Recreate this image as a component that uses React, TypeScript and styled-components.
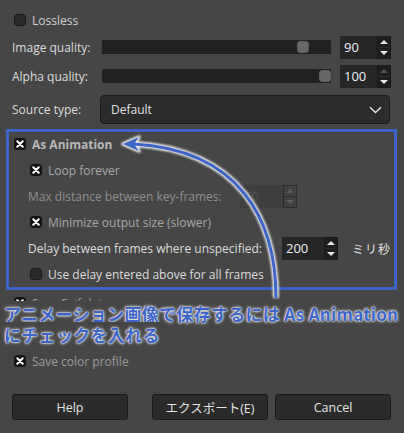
import React from "react";
import styled, { createGlobalStyle } from "styled-components";

const GlobalStyle = createGlobalStyle`
  html, body {
    margin: 0;
    padding: 0;
    background: #464646;
  }
  body {
    width: 404px;
    height: 433px;
    overflow: hidden;
    font-family: "Open Sans", "Noto Sans CJK JP", sans-serif;
    font-size: 12px;
    color: #dcdcdc;
  }
`;

const BLUE = "#3d65c7";

const Dialog = styled.div`
  position: relative;
  width: 404px;
  height: 433px;
  box-sizing: border-box;
  padding: 8px 13px 0 12px;
  display: flex;
  flex-direction: column;
`;

const Row = styled.div<{ $mt?: number; $h?: number; $pl?: number }>`
  display: flex;
  align-items: center;
  height: ${(p) => p.$h ?? 24}px;
  margin-top: ${(p) => p.$mt ?? 0}px;
  padding-left: ${(p) => p.$pl ?? 0}px;
  flex-shrink: 0;
`;

const Label = styled.span<{ $w?: number; $tone?: string; $bold?: boolean }>`
  width: ${(p) => (p.$w ? `${p.$w}px` : "auto")};
  flex-shrink: 0;
  color: ${(p) => p.$tone ?? "#dcdcdc"};
  font-weight: ${(p) => (p.$bold ? 700 : 400)};
  white-space: nowrap;
`;

const Box = styled.span<{ $on: boolean }>`
  width: 12px;
  height: 12px;
  box-sizing: border-box;
  border-radius: 3px;
  background: ${(p) => (p.$on ? "#141414" : "#2a2a2a")};
  border: 1px solid ${(p) => (p.$on ? "#141414" : "#1d1d1d")};
  display: inline-flex;
  align-items: center;
  justify-content: center;
  flex-shrink: 0;
  margin-right: 6px;
`;

const Check = ({ on, label, tone, bold }: { on: boolean; label: string; tone?: string; bold?: boolean }) => (
  <>
    <Box $on={on}>
      {on && (
        <svg width="8" height="8" viewBox="0 0 8 8">
          <path d="M1.3 1.3 L6.7 6.7 M6.7 1.3 L1.3 6.7" stroke="#fff" strokeWidth="2" strokeLinecap="round" />
        </svg>
      )}
    </Box>
    <Label $tone={tone} $bold={bold}>
      {label}
    </Label>
  </>
);

const Track = styled.div`
  position: relative;
  width: 229px;
  height: 14px;
  background: #222222;
  flex-shrink: 0;
`;

const Thumb = styled.div`
  position: absolute;
  top: 1px;
  width: 12px;
  height: 12px;
  box-sizing: border-box;
  border-radius: 3px;
  background: #676767;
  border: 1px solid #5c5c5c;
`;

const Slider = ({ value }: { value: number }) => (
  <Track>
    <Thumb style={{ left: Math.round((value / 100) * (229 - 12)) }} />
  </Track>
);

const SpinWrap = styled.div<{ $w: number; $ml?: number }>`
  display: flex;
  width: ${(p) => p.$w}px;
  height: 23px;
  margin-left: ${(p) => p.$ml ?? 0}px;
  flex-shrink: 0;
`;

const SpinValue = styled.div<{ $off?: boolean }>`
  flex: 1;
  display: flex;
  align-items: center;
  padding-left: 4px;
  background: ${(p) => (p.$off ? "#3f3f3f" : "#262626")};
  color: ${(p) => (p.$off ? "#565656" : "#ebeff7")};
  font-size: 13px;
`;

const SpinButtons = styled.div<{ $off?: boolean }>`
  width: 12px;
  display: flex;
  flex-direction: column;
  border: 1px solid ${(p) => (p.$off ? "#2c2c2c" : "#191919")};
  background: ${(p) => (p.$off ? "#414141" : "#1e1e1e")};
`;

const SpinButton = styled.div`
  flex: 1;
  display: flex;
  align-items: center;
  justify-content: center;
  & + & {
    border-top: 1px solid #2e2e2e;
  }
`;

const Tri = styled.span<{ $down?: boolean; $c: string }>`
  width: 0;
  height: 0;
  border-left: 4px solid transparent;
  border-right: 4px solid transparent;
  ${(p) => (p.$down ? `border-top: 4px solid ${p.$c};` : `border-bottom: 4px solid ${p.$c};`)}
`;

const Spin = ({
  value,
  w,
  ml,
  off,
  upOff,
}: {
  value: string;
  w: number;
  ml?: number;
  off?: boolean;
  upOff?: boolean;
}) => (
  <SpinWrap $w={w} $ml={ml}>
    <SpinValue $off={off}>{value}</SpinValue>
    <SpinButtons $off={off}>
      <SpinButton>
        <Tri $c={off ? "#5a5a5a" : upOff ? "#555" : "#e6e6e6"} />
      </SpinButton>
      <SpinButton>
        <Tri $down $c={off ? "#5a5a5a" : "#e6e6e6"} />
      </SpinButton>
    </SpinButtons>
  </SpinWrap>
);

const Combo = styled.div`
  width: 290px;
  height: 29px;
  box-sizing: border-box;
  display: flex;
  align-items: center;
  justify-content: space-between;
  padding: 0 7px 0 10px;
  background: #2c2c2c;
  border: 1px solid #1b1b1b;
  border-radius: 4px;
  color: #e2e2e2;
`;

const Frame = styled.div`
  display: flex;
  flex-direction: column;
  gap: 2px;
  margin: 5px -6px 0 -6px;
  padding: 0 0 1px 0;
  border: 3px solid ${BLUE};
  flex-shrink: 0;
`;

const Unit = styled.span`
  margin-left: 14px;
  font-family: "Noto Sans CJK JP", sans-serif;
  font-size: 12px;
  letter-spacing: 1px;
  color: #e0e0e0;
`;

const Buttons = styled.div`
  display: flex;
  gap: 7px;
  margin-top: 21px;
  height: 26px;
`;

const Button = styled.div<{ $push?: boolean }>`
  width: 116px;
  height: 26px;
  box-sizing: border-box;
  display: flex;
  align-items: center;
  justify-content: center;
  background: #2b2b2b;
  border: 1px solid #1c1c1c;
  border-radius: 3px;
  color: #e2e2e2;
  margin-left: ${(p) => (p.$push ? "auto" : "0")};
  font-size: 12.5px;
`;

const Note = styled.div`
  position: absolute;
  left: 4px;
  top: 303px;
  font-family: "Noto Sans CJK JP", "Noto Sans", sans-serif;
  font-weight: 700;
  font-size: 17px;
  line-height: 21px;
  letter-spacing: 0.3px;
  color: ${BLUE};
  white-space: nowrap;
  span {
    background: #464646;
    text-shadow: 0 0 1px #fff, 0 0 2px #f4f4f4, 0 0 3px #dcdcdc, 0 0 4px rgba(255, 255, 255, 0.45);
  }
`;

const Overlay = styled.svg`
  position: absolute;
  left: 0;
  top: 0;
  pointer-events: none;
`;

const CURVE = "M 276 298 C 276 220, 240 150, 134 144";
const HEAD = "123,144 139,137 134,144 139,151";

export default function App() {
  return (
    <>
      <GlobalStyle />
      <Dialog>
        <Row $pl={2}>
          <Check on={false} label="Lossless" tone="#cfcfcf" />
        </Row>
        <Row $mt={3}>
          <Label $w={90}>Image quality:</Label>
          <Slider value={90} />
          <Spin value="90" w={51} ml={9} />
        </Row>
        <Row $mt={5}>
          <Label $w={90}>Alpha quality:</Label>
          <Slider value={100} />
          <Spin value="100" w={51} ml={9} upOff />
        </Row>
        <Row $mt={7} $h={29}>
          <Label $w={88}>Source type:</Label>
          <Combo>
            <span>Default</span>
            <svg width="13" height="8" viewBox="0 0 13 8">
              <path d="M1 1.2 L6.5 6.5 L12 1.2" stroke="#e6e6e6" strokeWidth="1.4" fill="none" />
            </svg>
          </Combo>
        </Row>

        <Frame>
          <Row $pl={5}>
            <Check on label="As Animation" tone="#b8b8b8" bold />
          </Row>
          <Row $pl={21}>
            <Check on label="Loop forever" tone="#a6a6a6" />
          </Row>
          <Row $pl={19}>
            <Label $w={212} $tone="#8e8e8e">
              Max distance between key-frames:
            </Label>
            <Spin value="50" w={57} off />
          </Row>
          <Row $pl={21}>
            <Check on label="Minimize output size (slower)" tone="#a6a6a6" />
          </Row>
          <Row $pl={19}>
            <Label $w={254}>Delay between frames where unspecified:</Label>
            <Spin value="200" w={56} />
            <Unit>ミリ秒</Unit>
          </Row>
          <Row $pl={21}>
            <Check on={false} label="Use delay entered above for all frames" tone="#dcdcdc" />
          </Row>
        </Frame>

        <Row $mt={1} $pl={2}>
          <Check on label="Save Exif data" tone="#9c9c9c" />
        </Row>
        <Row $mt={5} $pl={2}>
          <Check on label="Save XMP data" tone="#9c9c9c" />
        </Row>
        <Row $mt={5} $pl={2}>
          <Check on label="Save color profile" tone="#9c9c9c" />
        </Row>

        <Buttons>
          <Button>Help</Button>
          <Button $push>エクスポート(E)</Button>
          <Button>Cancel</Button>
        </Buttons>

        <Note>
          <span>アニメーション画像で保存するには As Animation</span>
          <br />
          <span>にチェックを入れる</span>
        </Note>

        <Overlay width="404" height="433" viewBox="0 0 404 433">
          <defs>
            <filter id="halo" x="-10%" y="-10%" width="120%" height="120%">
              <feGaussianBlur stdDeviation="0.9" />
            </filter>
          </defs>
          <g filter="url(#halo)">
            <path d={CURVE} stroke="#f2f2f2" strokeWidth="6" fill="none" />
            <polygon points={HEAD} fill="#f2f2f2" stroke="#f2f2f2" strokeWidth="3.5" strokeLinejoin="round" />
          </g>
          <path d={CURVE} stroke={BLUE} strokeWidth="3" fill="none" />
          <polygon points={HEAD} fill={BLUE} />
        </Overlay>
      </Dialog>
    </>
  );
}
